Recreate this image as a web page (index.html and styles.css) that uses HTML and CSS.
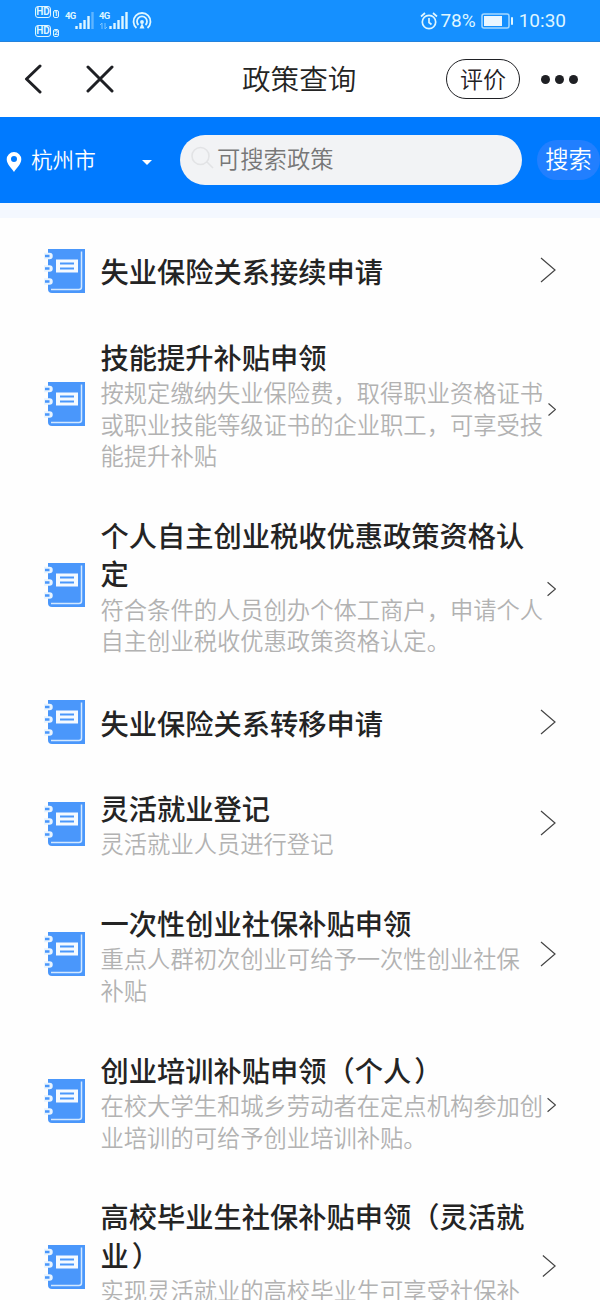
FILE: index.html
```html
<!DOCTYPE html>
<html lang="zh-CN">

<head>
  <meta charset="UTF-8" />
  <meta name="viewport" content="width=device-width, initial-scale=1.0" />
  <title>政策查询</title>
  <link rel="stylesheet" href="styles.css">
</head>

<body>
  <!-- Shared icons -->
  <svg class="symbols" width="0" height="0">
    <symbol id="book" viewBox="0 0 42 46">
      <path d="M4 1H41V45H8Q4 45 4 41Z" fill="#4a97fb" />
      <path d="M37.500 3.500V39Q37.500 41.500 35 41.500H7" fill="none" stroke="#d3e8ff" stroke-width="1.500" />
      <path d="M1 8H5.500M1 20.500H5.500M1 33.500H5.500" stroke="#e8f4ff" stroke-width="6.500" stroke-linecap="round" />
      <path d="M1 8H5.500M1 20.500H5.500M1 33.500H5.500" stroke="#4a97fb" stroke-width="2.500" />
      <rect x="12" y="11.500" width="22" height="13" fill="#f5faff" />
      <path d="M16 15.500H30M16 20.500H30" stroke="#4a97fb" stroke-width="1.900" />
    </symbol>
    <symbol id="arrow" viewBox="0 0 16 26">
      <path d="M1 1L15 13L1 25" fill="none" stroke="#444" stroke-width="1.200" vector-effect="non-scaling-stroke" />
    </symbol>
    <symbol id="signal" viewBox="0 0 19 17">
      <path d="M1.500 14V17M5.500 11V17M9.500 8V17M13.500 4V17" stroke="#dff6ff" stroke-width="2.400" />
    </symbol>
  </svg>

  <div class="status-bar">
    <div class="hd-group">
      <div class="hd"><b>HD</b><i>1</i></div>
      <div class="hd"><b>HD</b><i>2</i></div>
    </div>
    <div class="network">
      <span>4G</span>
      <svg width="19" height="17"><use href="#signal" /><path d="M17.500 0V17" stroke="#5fb5ff" stroke-width="2.400" /></svg>
    </div>
    <div class="network second">
      <span>4G</span>
      <svg class="data" width="8" height="6" viewBox="0 0 8 6"><path d="M2 6V0L0 2M5 0V6L7 4" fill="none" stroke="#7cc4ff" /></svg>
      <svg width="19" height="17"><use href="#signal" /><path d="M17.500 0V17" stroke="#dff6ff" stroke-width="2.400" /></svg>
    </div>
    <svg class="hotspot" width="20" height="18" viewBox="0 0 20 18" fill="none" stroke="#dff6ff" stroke-width="1.800">
      <path d="M4.500 16A8.500 8.500 0 1 1 15.500 16M6.500 13A5 5 0 1 1 13.500 13" />
      <circle cx="10" cy="10" r="1" fill="#dff6ff" />
      <path d="M10 11L7.500 16.500H12.500Z" fill="#dff6ff" stroke="none" />
    </svg>
    <div class="status-right">
      <svg width="18" height="18" viewBox="0 0 18 18" fill="none" stroke="#dff6ff" stroke-width="1.700">
        <circle cx="9" cy="10" r="6.700" />
        <path d="M9 6V10.500L11.500 12.500M1 4.500L5 1M17 4.500L13 1" />
      </svg>
      <span class="percent">78%</span>
      <svg class="battery" width="33" height="16" viewBox="0 0 33 16">
        <rect x="1" y="1" width="27" height="14" rx="2" fill="none" stroke="#a5d8ff" stroke-width="1.500" />
        <rect x="3" y="3" width="18" height="10" fill="#eaf6ff" />
        <rect x="30" y="4" width="2" height="8" rx="1" fill="#dff6ff" />
      </svg>
      <span class="time">10:30</span>
    </div>
  </div>

  <header class="nav-bar">
    <svg class="back" width="18" height="30" viewBox="0 0 18 30"><path d="M16 2L2.500 15L16 28" /></svg>
    <svg class="close" width="28" height="28" viewBox="0 0 28 28"><path d="M2 2L26 26M26 2L2 26" /></svg>
    <h1>政策查询</h1>
    <button class="rate">评价</button>
    <div class="more"><span></span><span></span><span></span></div>
  </header>

  <div class="search-bar">
    <svg class="pin" width="16" height="22" viewBox="0 0 16 22">
      <path fill="#fff" fill-rule="evenodd" d="M8 1A7.300 7.300 0 0 0 .7 8.300C.7 13 5 16.500 8 21C11 16.500 15.300 13 15.300 8.300A7.300 7.300 0 0 0 8 1ZM8 5A3 3 0 1 1 8 11A3 3 0 1 1 8 5Z" />
    </svg>
    <span class="city">杭州市</span>
    <span class="caret"></span>
    <div class="search-input">
      <svg width="23" height="23" viewBox="0 0 23 23"><path d="M16 16L22 22M18 10A8.500 8.500 0 1 1 1 10A8.500 8.500 0 1 1 18 10Z" fill="none" stroke="#e2e3e5" stroke-width="1.600" /></svg>
      <span>可搜索政策</span>
    </div>
    <button class="search-btn">搜索</button>
  </div>

  <main class="policy-list">
    <div class="policy">
      <svg class="book"><use href="#book" /></svg>
      <div class="text">
        <h2>失业保险关系接续申请</h2>
      </div>
      <svg class="arrow"><use href="#arrow" /></svg>
    </div>
    <div class="policy">
      <svg class="book"><use href="#book" /></svg>
      <div class="text">
        <h2>技能提升补贴申领</h2>
        <p>按规定缴纳失业保险费，取得职业资格证书<br>或职业技能等级证书的企业职工，可享受技<br>能提升补贴</p>
      </div>
      <svg class="arrow small"><use href="#arrow" /></svg>
    </div>
    <div class="policy">
      <svg class="book"><use href="#book" /></svg>
      <div class="text">
        <h2>个人自主创业税收优惠政策资格认<br>定</h2>
        <p>符合条件的人员创办个体工商户，申请个人<br>自主创业税收优惠政策资格认定。</p>
      </div>
      <svg class="arrow medium"><use href="#arrow" /></svg>
    </div>
    <div class="policy">
      <svg class="book"><use href="#book" /></svg>
      <div class="text">
        <h2>失业保险关系转移申请</h2>
      </div>
      <svg class="arrow"><use href="#arrow" /></svg>
    </div>
    <div class="policy">
      <svg class="book"><use href="#book" /></svg>
      <div class="text">
        <h2>灵活就业登记</h2>
        <p>灵活就业人员进行登记</p>
      </div>
      <svg class="arrow"><use href="#arrow" /></svg>
    </div>
    <div class="policy">
      <svg class="book"><use href="#book" /></svg>
      <div class="text">
        <h2>一次性创业社保补贴申领</h2>
        <p>重点人群初次创业可给予一次性创业社保<br>补贴</p>
      </div>
      <svg class="arrow"><use href="#arrow" /></svg>
    </div>
    <div class="policy">
      <svg class="book"><use href="#book" /></svg>
      <div class="text">
        <h2>创业培训补贴申领（个人<span class="paren">）</span></h2>
        <p>在校大学生和城乡劳动者在定点机构参加创<br>业培训的可给予创业培训补贴。</p>
      </div>
      <svg class="arrow medium"><use href="#arrow" /></svg>
    </div>
    <div class="policy last">
      <svg class="book"><use href="#book" /></svg>
      <div class="text">
        <h2>高校毕业生社保补贴申领（灵活就<br>业<span class="paren">）</span></h2>
        <p>实现灵活就业的高校毕业生可享受社保补</p>
      </div>
      <svg class="arrow large"><use href="#arrow" /></svg>
    </div>
  </main>
</body>

</html>
```
FILE: styles.css
```css
* {
  box-sizing: border-box;
  margin: 0;
  padding: 0;
}

body {
  width: 600px;
  height: 1300px;
  overflow: hidden;
  background: #fefefe;
  color: #242424;
  font-family: "Noto Sans CJK SC", sans-serif;
  font-weight: 350;
}

svg {
  display: block;
  flex-shrink: 0;
}

button {
  font-family: inherit;
  font-weight: inherit;
  border: none;
}

.symbols {
  position: absolute;
}

/* status bar */
.status-bar {
  display: flex;
  height: 42px;
  padding-left: 35px;
  background: #1590ff;
  border-bottom: 1px solid #2583dc;
  color: #dff6ff;
  font-family: Roboto, sans-serif;
  font-weight: 400;
}

.hd-group {
  width: 30px;
  padding-top: 6px;
}

.hd {
  display: flex;
  align-items: flex-end;
  gap: 2px;
  height: 12px;
  margin-bottom: 7px;
}

.hd b {
  width: 16px;
  height: 12px;
  border: 1px solid #dff6ff;
  border-radius: 3px;
  font-size: 10px;
  line-height: 10px;
  text-align: center;
}

.hd i {
  width: 6px;
  height: 8px;
  border: 1px solid #dff6ff;
  border-radius: 2px;
  font-size: 7px;
  font-style: normal;
  font-weight: bold;
  line-height: 7px;
  text-align: center;
}

.network {
  display: flex;
  align-items: flex-end;
  width: 34px;
  height: 29px;
}

.network span {
  width: 10px;
  margin-bottom: 8px;
  font-size: 9.5px;
  font-weight: bold;
  line-height: 10px;
  letter-spacing: -0.8px;
}

.network.second .data {
  margin-left: -10px;
}

.network.second svg:last-child {
  margin-left: 1px;
}

.network.second span {
  width: 11px;
}

.hotspot {
  margin: 12px 0 0 -1px;
}

.status-right {
  display: flex;
  align-items: center;
  margin-left: auto;
  padding-right: 34px;
  font-size: 19px;
}

.percent {
  margin-left: 2px;
}

.battery {
  margin: 0 5px;
}

/* title bar */
.nav-bar {
  display: flex;
  align-items: center;
  height: 75px;
  padding: 0 0 1px 24px;
  background: #fff;
}

.back,
.close {
  fill: none;
  stroke: #1f2024;
  stroke-width: 3;
  stroke-linecap: round;
  stroke-linejoin: round;
}

.close {
  margin-left: 44px;
}

.nav-bar h1 {
  width: 120px;
  margin: -2px 0 0 128px;
  font-size: 28.6px;
  font-weight: 350;
  line-height: 40px;
  white-space: nowrap;
}

.rate {
  width: 74px;
  height: 40px;
  margin-left: 84px;
  border: 1.5px solid #1f2024;
  border-radius: 21px;
  background: #fff;
  color: #1f2024;
  font-size: 23px;
  line-height: 34px;
  padding-bottom: 2px;
}

.more {
  display: flex;
  gap: 5px;
  margin-left: 21px;
}

.more span {
  width: 9px;
  height: 9px;
  border-radius: 50%;
  background: #1f2024;
}

/* search */
.search-bar {
  display: flex;
  align-items: center;
  height: 86px;
  padding-left: 6px;
  background: #007aff;
  color: #fff;
}

.pin {
  margin-top: 3px;
}

.city {
  width: 72px;
  margin: -3px 0 0 9px;
  font-size: 21.6px;
  line-height: 32px;
}

.caret {
  margin: 4px 0 0 39px;
  border: 5px solid transparent;
  border-top-color: #fff;
  border-bottom: none;
}

.search-input {
  display: flex;
  align-items: center;
  width: 342px;
  height: 50px;
  margin-left: 28px;
  padding: 0 0 4px 11px;
  border-radius: 25px;
  background: #f2f3f5;
  color: #777;
  font-size: 23.3px;
}

.search-input svg {
  margin-top: -2px;
}

.search-input span {
  margin-left: 3px;
}

.search-btn {
  flex-shrink: 0;
  width: 63px;
  height: 40px;
  margin-left: 15px;
  border-radius: 20px;
  background: #217fff;
  color: #fff;
  font-size: 23.3px;
  line-height: 36px;
  padding-bottom: 4px;
}

/* list */
.policy-list {
  display: flex;
  flex-direction: column;
  gap: 44px;
  padding: 31.5px 44px 0;
  border-top: 15px solid #f4f8ff;
}

.policy {
  display: flex;
  align-items: center;
  flex-shrink: 0;
}

/* runs past the bottom edge of the screen */
.policy.last {
  height: 141px;
}

.book {
  width: 42px;
  height: 46px;
  margin-top: -2px;
}

.text {
  width: 440px;
  margin-left: 14.5px;
  white-space: nowrap;
}

.policy.last .text {
  align-self: flex-start;
}

.text h2 {
  color: #242424;
  font-size: 28.25px;
  font-weight: 500;
  line-height: 38.4px;
}

.text p {
  padding-top: 0.9px;
  color: #b2b2b2;
  font-size: 23.3px;
  line-height: 31.7px;
}

.paren {
  margin-left: 3px;
}

.arrow {
  width: 16px;
  height: 26px;
  margin: -3px 0 0 auto;
}

.arrow.small {
  width: 8px;
  height: 13px;
  margin-top: 9px;
}

.arrow.medium {
  width: 9px;
  height: 16px;
  margin-top: 6px;
}

.arrow.large {
  width: 14px;
  height: 24px;
}
```
